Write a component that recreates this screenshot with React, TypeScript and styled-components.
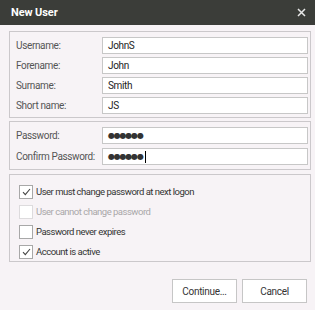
import * as React from "react";
import styled, { createGlobalStyle } from "styled-components";

const GlobalStyle = createGlobalStyle`
  html, body {
    margin: 0;
    padding: 0;
    background: #f7f3f6;
  }
  body {
    font-family: Roboto, "Liberation Sans", sans-serif;
  }
`;

const Dialog = styled.div`
  background: #f7f3f6;
  display: flex;
  flex-direction: column;
  height: 310px;
  width: 315px;
`;

const TitleBar = styled.div`
  align-items: center;
  background: #3b3d39;
  color: #ffffff;
  display: flex;
  height: 25px;
  justify-content: space-between;
  padding: 0 9px 0 11px;
`;

const Title = styled.span`
  font-size: 11px;
  font-weight: 700;
  letter-spacing: -0.1px;
`;

const CloseIcon = styled.svg`
  display: block;
  height: 9px;
  width: 9px;
`;

const Body = styled.div`
  display: flex;
  flex-direction: column;
  gap: 3px;
  padding: 6px 4px 0 9px;
`;

const Group = styled.div<{ $pad: string; $gap: number }>`
  border: 1px solid #cbc8cb;
  display: grid;
  grid-template-columns: 86px 1fr;
  row-gap: ${(p) => p.$gap}px;
  padding: ${(p) => p.$pad};
`;

const Label = styled.label`
  align-self: center;
  color: #555555;
  font-size: 10px;
  letter-spacing: -0.35px;
  white-space: nowrap;
`;

const Input = styled.div`
  align-items: center;
  background: #ffffff;
  border: 1px solid #c7c7c7;
  box-sizing: border-box;
  color: #222222;
  display: flex;
  font-size: 10px;
  height: 17px;
  letter-spacing: -0.35px;
  padding: 0 5px;
`;

const Dots = styled.span`
  color: #333333;
  font-family: "DejaVu Sans", sans-serif;
  font-size: 8px;
  letter-spacing: -1.2px;
`;

const Caret = styled.span`
  background: #000000;
  display: inline-block;
  height: 12px;
  margin-left: 2px;
  width: 1px;
`;

const CheckGroup = styled.div`
  border: 1px solid #cbc8cb;
  display: flex;
  flex-direction: column;
  gap: 7px;
  margin-top: 1px;
  padding: 10px 6px 3px 9px;
`;

const CheckRow = styled.div<{ $disabled?: boolean }>`
  align-items: center;
  color: ${(p) => (p.$disabled ? "#a9a7a9" : "#333333")};
  display: flex;
  font-size: 9.5px;
  gap: 3px;
  height: 13px;
  letter-spacing: -0.5px;
`;

const Box = styled.span<{ $disabled?: boolean }>`
  align-items: center;
  background: #ffffff;
  border: 1px solid ${(p) => (p.$disabled ? "#dddbdd" : "#a8a8a8")};
  box-sizing: border-box;
  display: flex;
  height: 14px;
  justify-content: center;
  width: 14px;
`;

const Buttons = styled.div`
  display: flex;
  gap: 5px;
  justify-content: flex-end;
  margin-top: 14px;
  padding-right: 4px;
`;

const Button = styled.button`
  background: #ffffff;
  border: 1px solid #c6c6c6;
  color: #333333;
  font-family: Roboto, "Liberation Sans", sans-serif;
  font-size: 10px;
  height: 24px;
  letter-spacing: -0.3px;
  padding: 0;
  width: 65px;
`;

const Check = () => (
  <svg width="9" height="8" viewBox="0 0 9 8">
    <path d="M1 4.2 L3.3 6.6 L8 1" fill="none" stroke="#444" strokeWidth="1.1" />
  </svg>
);

interface CheckProps {
  label: string;
  checked?: boolean;
  disabled?: boolean;
}

const CheckItem = (props: CheckProps) => (
  <CheckRow $disabled={props.disabled}>
    <Box $disabled={props.disabled}>{props.checked && <Check />}</Box>
    {props.label}
  </CheckRow>
);

const App = () => {
  return (
    <Dialog>
      <GlobalStyle />
      <TitleBar>
        <Title>New User</Title>
        <CloseIcon viewBox="0 0 9 9">
          <path d="M1 1 L8 8 M8 1 L1 8" stroke="#e8e8e8" strokeWidth="1.5" />
        </CloseIcon>
      </TitleBar>

      <Body>
        <Group $pad="5px 2px 3px 6px" $gap={3}>
          <Label>Username:</Label>
          <Input>JohnS</Input>
          <Label>Forename:</Label>
          <Input>John</Input>
          <Label>Surname:</Label>
          <Input>Smith</Input>
          <Label>Short name:</Label>
          <Input>JS</Input>
        </Group>

        <Group $pad="5px 2px 4px 6px" $gap={4}>
          <Label>Password:</Label>
          <Input>
            <Dots>●●●●●●</Dots>
          </Input>
          <Label>Confirm Password:</Label>
          <Input>
            <Dots>●●●●●●</Dots>
            <Caret />
          </Input>
        </Group>

        <CheckGroup>
          <CheckItem label="User must change password at next logon" checked />
          <CheckItem label="User cannot change password" disabled />
          <CheckItem label="Password never expires" />
          <CheckItem label="Account is active" checked />
        </CheckGroup>

        <Buttons>
          <Button>Continue...</Button>
          <Button>Cancel</Button>
        </Buttons>
      </Body>
    </Dialog>
  );
};

export default App;
